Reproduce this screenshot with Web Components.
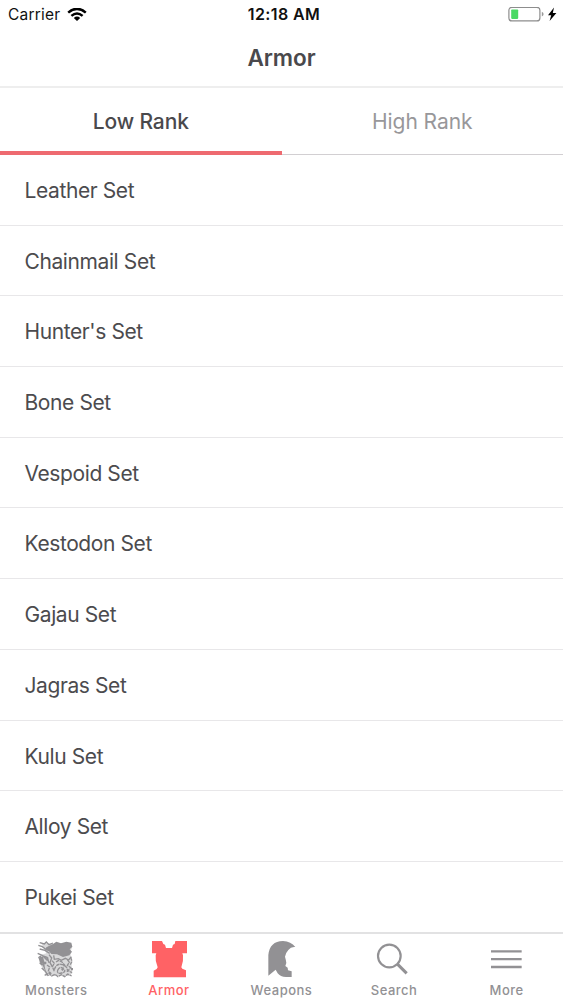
<!DOCTYPE html>
<html lang="en">
<head>
<meta charset="utf-8">
<meta name="viewport" content="width=device-width, initial-scale=1">
<title>Armor</title>
<style>
body {
  margin: 0;
  background: #fff;
  font-family: Inter, "Liberation Sans", sans-serif;
}
</style>
</head>
<body>
<armor-app>
  <status-bar slot="header" carrier="Carrier" time="12:18 AM"></status-bar>
  <nav-title slot="header">Armor</nav-title>
  <rank-tabs slot="header">
    <rank-tab active>Low Rank</rank-tab>
    <rank-tab style="--track: -.07px">High Rank</rank-tab>
  </rank-tabs>
  <list-row>Leather Set</list-row>
  <list-row>Chainmail Set</list-row>
  <list-row>Hunter's Set</list-row>
  <list-row>Bone Set</list-row>
  <list-row>Vespoid Set</list-row>
  <list-row>Kestodon Set</list-row>
  <list-row>Gajau Set</list-row>
  <list-row>Jagras Set</list-row>
  <list-row>Kulu Set</list-row>
  <list-row>Alloy Set</list-row>
  <list-row>Pukei Set</list-row>
  <tab-bar slot="footer">
    <tab-item icon="monsters">Monsters</tab-item>
    <tab-item icon="armor" active>Armor</tab-item>
    <tab-item icon="weapons">Weapons</tab-item>
    <tab-item icon="search">Search</tab-item>
    <tab-item icon="more">More</tab-item>
  </tab-bar>
</armor-app>

<script>
"use strict";

class BaseElement extends HTMLElement {
  constructor() {
    super();
    this.attachShadow({ mode: 'open' });
  }

  connectedCallback() {
    this.shadowRoot.innerHTML = this._getTemplate();
  }
}

/**
 * Full height screen: header, clipped list, footer.
 */
class ArmorApp extends BaseElement {
  _getTemplate() {
    return `
<style>
:host {
  display: flex;
  flex-direction: column;
  height: 100vh;
  overflow: hidden;
}
header, footer { flex: none; }
main {
  flex: 1;
  min-height: 0;
  overflow: hidden;
}
</style>
<header><slot name="header"></slot></header>
<main><slot></slot></main>
<footer><slot name="footer"></slot></footer>
`;
  }
}
customElements.define('armor-app', ArmorApp);

class StatusBar extends BaseElement {
  _getTemplate() {
    return `
<style>
:host {
  display: grid;
  grid-template-columns: 1fr auto 1fr;
  align-items: center;
  height: 28px;
  padding: 0 6px 0 8px;
  color: #111;
  font-size: 15.5px;
  line-height: 29px;
}
.left, .right { display: flex; align-items: center; }
.left { gap: 7px; }
.right { justify-content: flex-end; }
.carrier { letter-spacing: .2px; }
.time { margin-left: 3px; font-size: 16px; font-weight: 600; letter-spacing: .4px; }
svg { display: block; }
</style>
<div class="left">
  <span class="carrier">${this.getAttribute("carrier")}</span>
  <svg width="20" height="14" viewBox="0 0 20 14" fill="none" stroke="#000" stroke-width="2.5">
    <path d="M1.2 4.6Q10 -2.9 18.8 4.6M4.4 7.9Q10 3.1 15.6 7.9"/>
    <path d="M6.8 9.9Q10 7.3 13.2 9.9L10 13.1Z" fill="#000" stroke="none"/>
  </svg>
</div>
<span class="time">${this.getAttribute("time")}</span>
<div class="right">
  <svg width="49" height="16" viewBox="0 0 49 16">
    <rect x=".9" y=".3" width="31" height="13.6" rx="3" fill="none" stroke="#8d8d8d" stroke-width="1.2"/>
    <rect x="3.2" y="2.5" width="7" height="9.4" rx=".8" fill="#4bd964"/>
    <path d="M33.8 4.7q1.8 .6 1.8 2.4t-1.8 2.4z" fill="#9a9a9a"/>
    <path d="M46 .4L40 8.2h3.2l-1.6 5.8L48.4 6h-3.6z" fill="#000"/>
  </svg>
</div>
`;
  }
}
customElements.define('status-bar', StatusBar);

class NavTitle extends BaseElement {
  _getTemplate() {
    return `
<style>
:host {
  display: block;
  height: 58px;
  border-bottom: 2px solid #eee;
  box-sizing: content-box;
  color: #4a494c;
  font-size: 22.5px;
  font-weight: 600;
  line-height: 60px;
  letter-spacing: -.05px;
  text-align: center;
}
</style>
<slot></slot>
`;
  }
}
customElements.define('nav-title', NavTitle);

class RankTabs extends BaseElement {
  _getTemplate() {
    return `
<style>
:host {
  display: flex;
  height: 66px;
  border-bottom: 1px solid #d2cfd2;
}
</style>
<slot></slot>
`;
  }
}
customElements.define('rank-tabs', RankTabs);

class RankTab extends BaseElement {
  _getTemplate() {
    return `
<style>
:host {
  flex: 1;
  box-sizing: border-box;
  height: 67px;
  color: #98979a;
  font-size: 21px;
  line-height: 67px;
  letter-spacing: var(--track, 0);
  text-align: center;
}
:host([active]) {
  border-bottom: 4px solid #ee6a70;
  color: #4a494c;
  font-weight: 500;
  letter-spacing: -.1px;
}
</style>
<slot></slot>
`;
  }
}
customElements.define('rank-tab', RankTab);

class ListRow extends BaseElement {
  _getTemplate() {
    return `
<style>
:host {
  display: block;
  box-sizing: border-box;
  height: 70.7px;
  padding-left: 24.5px;
  border-bottom: 1px solid #e8e7e9;
  color: #4c4b4e;
  font-size: 21px;
  line-height: 71.3px;
  letter-spacing: -.4px;
}
</style>
<slot></slot>
`;
  }
}
customElements.define('list-row', ListRow);

class TabBar extends BaseElement {
  _getTemplate() {
    return `
<style>
:host {
  display: flex;
  height: 66px;
  border-top: 2px solid #e2e2e3;
  background: #fff;
}
</style>
<slot></slot>
`;
  }
}
customElements.define('tab-bar', TabBar);

// All drawn on a 114 unit grid
const ICONS = {
  monsters: `
<path fill="currentColor" opacity=".35" d="M12 8L50 12 92 8 106 20 100 36 106 100 96 108 28 108 20 90 6 66 8 46 28 40z"/>
<path fill="currentColor" d="M28 22L48 12 58 5 72 10 88 5 103 8 106 20 98 28 105 35 97 46 78 51 60 43 43 42 36 34 24 30z"/>
<g fill="none" stroke="currentColor" stroke-width="4">
  <path d="M8 8l14 4 6-6 8 8 12-5M4 16l12 4 10 8M8 27l16 4 14 9M2 40l15 7 12 12M5 50l7 18 10 10M18 48l12 4 6 16M36 44l8 10-5 14 7 12M50 46l2 12 12-2 9 5 12-6 10 5 8-10"/>
  <path d="M8 69l13 10 4 16M14 84l12 11 8 13M30 75l8 6-4 12 9 8M45 62l7 8-6 10 6 14M57 66l8-5 10 5 8 9-4 7M52 89q6-21 24-15t15 22M62 91q6-14 17-5t-5 13-12-8M91 59l6 8-6 9 10 7-8 9 12 6M101 52l4 12-5 10M23 106l12-7 9 9 10-5 9 7 10-6 10 6 9-8 12 6" stroke-dasharray="11 2"/>
  <path d="M9 48l5 22M15 50l6 24M31 52v10M25 65v8M74 87l5 4M105 84v7" stroke-width="6"/>
</g>`,
  armor: `<path fill="currentColor" d="M6 3h30l4 9 5 2 3 10h18l3-10 5-2 2-9h35v37H97l2 6q2 18-5 36l3 4 11 5v21H11V92l9-5 3-5q-8-18-6-36l2-6H6z"/>`,
  weapons: `<path fill="currentColor" d="M19 107V45Q23 4 63 3q24 2 37 18-13-2-21 9-9 10-10 20 3 10 4 19l-3 9 7 5 1 8 11 3v17H72Q55 111 47 100l-6-11z"/>`,
  search: `<g fill="none" stroke="currentColor"><circle cx="43" cy="48" r="34" stroke-width="6.5"/><path d="M68 73l27 27" stroke-width="9"/></g>`,
  more: `<path fill="none" stroke="currentColor" stroke-width="7" d="M9 34h92M9 57.5h92M9 81h92"/>`,
};

class TabItem extends BaseElement {
  _getTemplate() {
    return `
<style>
:host {
  display: flex;
  flex: 1;
  flex-direction: column;
  align-items: center;
  padding-top: 6px;
  color: #929194;
  font-size: 13px;
  font-weight: 500;
  line-height: 16px;
  letter-spacing: .5px;
}
:host([active]) { color: #ff6265; }
svg { display: block; flex: none; margin-bottom: 4px; }
</style>
<svg width="38" height="38" viewBox="0 0 114 114">${ICONS[this.getAttribute("icon")]}</svg>
<slot></slot>
`;
  }
}
customElements.define('tab-item', TabItem);
</script>
</body>
</html>
